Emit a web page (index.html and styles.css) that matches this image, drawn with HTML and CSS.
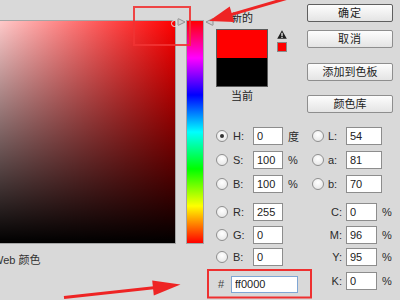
FILE: index.html
```html
<!DOCTYPE html>
<html lang="zh">
<head>
<meta charset="utf-8">
<link rel="stylesheet" href="styles.css">
</head>
<body>
<div class="picker">
  <div class="field-col">
    <div class="field"><span class="field-ring"></span></div>
    <div class="web">Web 颜色</div>
  </div>
  <div class="hue">
    <svg class="slider slider-l" width="9" height="8" viewBox="0 0 9 8"><path d="M1 1.2 Q1 0.5 1.7 0.8 L8 4 L1.7 7.2 Q1 7.5 1 6.8 Z" fill="#cfcfcf" stroke="#8a8a8a" stroke-width="0.9"/></svg>
    <svg class="slider slider-r" width="9" height="8" viewBox="0 0 9 8"><path d="M8 1.2 Q8 0.5 7.3 0.8 L1 4 L7.3 7.2 Q8 7.5 8 6.8 Z" fill="#cfcfcf" stroke="#8a8a8a" stroke-width="0.9"/></svg>
  </div>
  <div class="right">
    <div class="top">
      <div class="swatch-col">
        <div class="cap">新的</div>
        <div class="swatch"><div class="new"></div><div class="cur"></div></div>
        <div class="cap cap-cur">当前</div>
      </div>
      <div class="icons">
        <svg class="warn" width="10" height="9" viewBox="0 0 10 9"><path d="M5 0.3 L9.8 8.7 L0.2 8.7 Z" fill="#1e1e1e"/><rect x="4.4" y="2.8" width="1.2" height="3.4" fill="#fff"/><rect x="4.4" y="6.9" width="1.2" height="1.1" fill="#fff"/></svg>
        <span class="gamut"></span>
      </div>
      <div class="buttons">
        <button class="btn btn-default">确定</button>
        <button class="btn btn-2">取消</button>
        <button class="btn btn-3">添加到色板</button>
        <button class="btn btn-4">颜色库</button>
      </div>
    </div>
    <div class="form">
      <div class="c"><span class="radio checked"></span></div>
      <div class="c lbl">H:</div>
      <div class="c"><input class="inp" value="0"></div>
      <div class="c unit">度</div>
      <div class="c"><span class="radio"></span></div>
      <div class="c lbl2">L:</div>
      <div class="c"><input class="inp wide" value="54"></div>
      <div class="c"></div>

      <div class="c"><span class="radio"></span></div>
      <div class="c lbl">S:</div>
      <div class="c"><input class="inp" value="100"></div>
      <div class="c unit">%</div>
      <div class="c"><span class="radio"></span></div>
      <div class="c lbl2">a:</div>
      <div class="c"><input class="inp wide" value="81"></div>
      <div class="c"></div>

      <div class="c"><span class="radio"></span></div>
      <div class="c lbl">B:</div>
      <div class="c"><input class="inp" value="100"></div>
      <div class="c unit">%</div>
      <div class="c"><span class="radio"></span></div>
      <div class="c lbl2">b:</div>
      <div class="c"><input class="inp wide" value="70"></div>
      <div class="c"></div>

      <div class="c"><span class="radio"></span></div>
      <div class="c lbl">R:</div>
      <div class="c"><input class="inp" value="255"></div>
      <div class="c"></div>
      <div class="c cmyk">C:</div>
      <div class="c"><input class="inp narrow" value="0"></div>
      <div class="c">%</div>

      <div class="c"><span class="radio"></span></div>
      <div class="c lbl">G:</div>
      <div class="c"><input class="inp" value="0"></div>
      <div class="c"></div>
      <div class="c cmyk">M:</div>
      <div class="c"><input class="inp narrow" value="96"></div>
      <div class="c">%</div>

      <div class="c"><span class="radio"></span></div>
      <div class="c lbl">B:</div>
      <div class="c"><input class="inp" value="0"></div>
      <div class="c"></div>
      <div class="c cmyk">Y:</div>
      <div class="c"><input class="inp narrow" value="95"></div>
      <div class="c">%</div>

      <div class="c hex"><span class="hash">#</span><input class="inp hex-inp" value="ff0000"></div>
      <div class="c cmyk">K:</div>
      <div class="c"><input class="inp narrow" value="0"></div>
      <div class="c">%</div>
    </div>
  </div>
</div>
<svg class="annot" width="400" height="300" viewBox="0 0 400 300">
  <rect x="134" y="7" width="56" height="38" fill="none" stroke="#f03333" stroke-width="2" opacity="0.9"/>
  <line x1="302" y1="-6" x2="231" y2="14.6" stroke="#ee2424" stroke-width="3"/>
  <polygon points="209,21 229.7,6.5 234.3,21.9" fill="#ee2424"/>
  <line x1="64" y1="297.5" x2="156" y2="287.4" stroke="#ee2424" stroke-width="3"/>
  <polygon points="180.5,284.5 152.2,280.5 153.8,295.5" fill="#ee2424"/>
  <rect x="208" y="270" width="103" height="27.5" fill="none" stroke="#ee3030" stroke-width="2"/>
</svg>
</body>
</html>
```
FILE: styles.css
```css
html, body {
  margin: 0;
  padding: 0;
}
body {
  position: relative;
  width: 400px;
  height: 300px;
  overflow: hidden;
  background: #d9d9d9;
  font-family: "Liberation Sans", "Noto Sans CJK SC", sans-serif;
  font-size: 11px;
  color: #2b2b2b;
}
.picker {
  display: flex;
  align-items: flex-start;
}
.field-col {
  width: 175px;
  margin-top: 21px;
}
.field {
  position: relative;
  width: 222px;
  height: 222px;
  margin-left: -47px;
  background: linear-gradient(to top, #000, rgba(0, 0, 0, 0)), linear-gradient(to right, #fff, #f00);
  box-shadow: 0 0 0 1px #a5a5a5;
}
.field-ring {
  position: absolute;
  left: 218px;
  top: -1px;
  width: 5px;
  height: 5px;
  border: 1px solid #e4e4e4;
  border-radius: 50%;
}
.web {
  margin-top: 10px;
  margin-left: -7px;
  line-height: 14px;
  white-space: nowrap;
  color: #333;
}
.hue {
  position: relative;
  width: 16px;
  height: 222px;
  margin: 21px 0 0 12px;
  background: linear-gradient(to bottom, #f00 0%, #f0f 16.67%, #00f 33.33%, #0ff 50%, #0f0 66.67%, #ff0 83.33%, #f00 100%);
  box-shadow: 0 0 0 1px #a5a5a5;
}
.slider {
  position: absolute;
  top: -3px;
}
.slider-l { left: -10px; }
.slider-r { left: 18px; }
.right {
  margin-left: 13px;
  width: 184px;
}
.top {
  display: flex;
  align-items: flex-start;
}
.swatch-col {
  width: 52px;
  margin-top: 11px;
  display: flex;
  flex-direction: column;
  align-items: center;
}
.cap {
  line-height: 14px;
  color: #222;
}
.cap-cur {
  margin-top: 2px;
}
.swatch {
  width: 50px;
  height: 56px;
  margin-top: 4px;
  border: 1px solid #5a5a5a;
}
.new { height: 28px; background: #f00; }
.cur { height: 28px; background: #000; }
.icons {
  width: 10px;
  margin: 30px 0 0 9px;
  display: flex;
  flex-direction: column;
  gap: 3px;
}
.warn { display: block; }
.gamut {
  display: block;
  width: 8px;
  height: 8px;
  border: 1px solid #8a8a8a;
  background: #f00;
}
.buttons {
  width: 86px;
  margin: 4px 0 0 20px;
  display: flex;
  flex-direction: column;
}
.btn {
  box-sizing: border-box;
  height: 18px;
  padding: 0;
  border: 1px solid #8e8e8e;
  border-radius: 2px;
  background: linear-gradient(#fdfdfd, #e4e4e4);
  font-family: "Liberation Sans", "Noto Sans CJK SC", sans-serif;
  font-size: 11px;
  line-height: 16px;
  color: #222;
}
.btn-default {
  border-color: #5f5f5f;
  letter-spacing: 1px;
}
.btn-2 { margin-top: 8px; letter-spacing: 1px; }
.btn-3 { margin-top: 15px; }
.btn-4 { margin-top: 14px; }
.form {
  margin-top: 14px;
  display: grid;
  grid-template-columns: 13px 24px 30px 29px 13px 21px 36px 18px;
  grid-template-rows: 24px 24px 28px 23px 22px 24px 26px;
}
.c {
  height: 18px;
  display: flex;
  align-items: center;
  white-space: nowrap;
}
.lbl { padding-left: 4px; }
.lbl2 { padding-left: 3px; }
.unit { padding-left: 5px; }
.cmyk {
  grid-column: span 2;
  justify-content: flex-end;
  padding-right: 4px;
}
.radio {
  box-sizing: border-box;
  position: relative;
  width: 12px;
  height: 12px;
  border: 1px solid #8f8f8f;
  border-radius: 50%;
  background: radial-gradient(circle at 50% 35%, #ffffff, #e2e2e2);
}
.radio.checked::after {
  content: "";
  position: absolute;
  left: 3px;
  top: 3px;
  width: 4px;
  height: 4px;
  border-radius: 50%;
  background: #333;
}
.inp {
  box-sizing: border-box;
  width: 30px;
  height: 18px;
  margin: 0;
  padding: 0 0 0 3px;
  border: 1px solid #8d8d8d;
  background: #fff;
  font-family: "Liberation Sans", sans-serif;
  font-size: 11px;
  color: #222;
  outline: none;
}
.inp.wide { width: 36px; }
.inp.narrow { width: 31px; }
.hex {
  grid-column: 1 / 5;
  margin-top: 3px;
}
.hash {
  width: 13px;
  padding-left: 2px;
  box-sizing: content-box;
  color: #444;
}
.inp.hex-inp {
  width: 67px;
  height: 17px;
  border-color: #7fa6d4;
}
.annot {
  position: absolute;
  left: 0;
  top: 0;
  pointer-events: none;
}
```
